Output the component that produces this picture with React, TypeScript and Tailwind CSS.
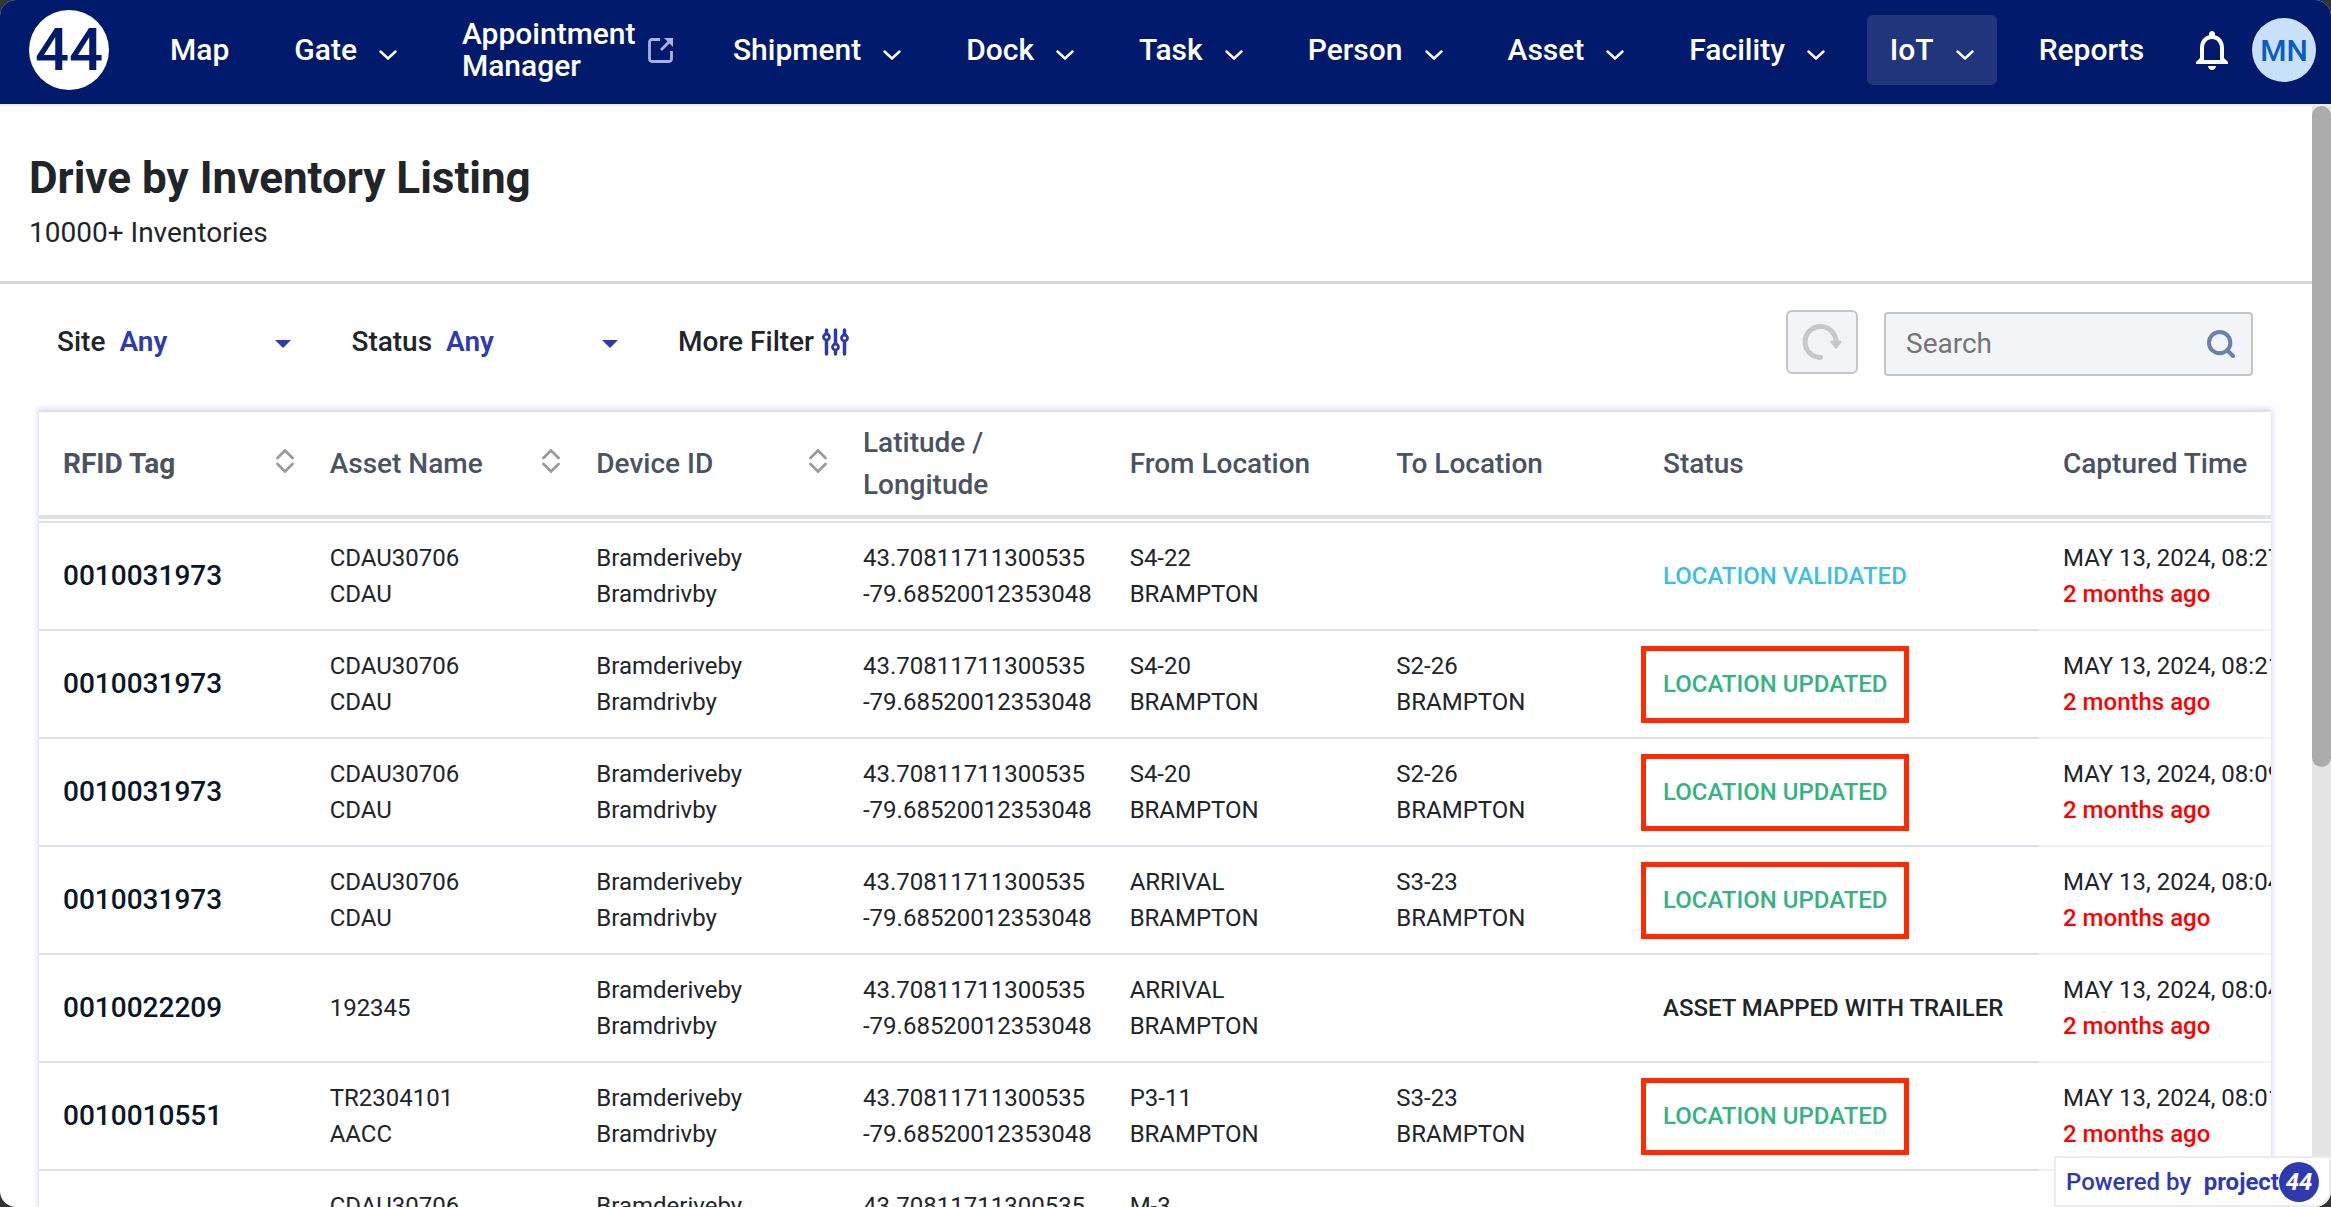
import React from "react";
import {Search} from "lucide-react";
import {MdNotificationsNone} from "react-icons/md";

type NavItem = { label: string; menu?: boolean; external?: boolean; active?: boolean };

const navItems: NavItem[] = [
  {label: "Map"},
  {label: "Gate", menu: true},
  {label: "Appointment Manager", external: true},
  {label: "Shipment", menu: true},
  {label: "Dock", menu: true},
  {label: "Task", menu: true},
  {label: "Person", menu: true},
  {label: "Asset", menu: true},
  {label: "Facility", menu: true},
  {label: "IoT", menu: true, active: true},
  {label: "Reports"},
];

type Row = {
  tag: string;
  asset: string[];
  from: string[];
  to: string[];
  status: string;
  captured: string;
};

const rows: Row[] = [
  {tag: "0010031973", asset: ["CDAU30706", "CDAU"], from: ["S4-22", "BRAMPTON"], to: [], status: "LOCATION VALIDATED", captured: "MAY 13, 2024, 08:27"},
  {tag: "0010031973", asset: ["CDAU30706", "CDAU"], from: ["S4-20", "BRAMPTON"], to: ["S2-26", "BRAMPTON"], status: "LOCATION UPDATED", captured: "MAY 13, 2024, 08:21"},
  {tag: "0010031973", asset: ["CDAU30706", "CDAU"], from: ["S4-20", "BRAMPTON"], to: ["S2-26", "BRAMPTON"], status: "LOCATION UPDATED", captured: "MAY 13, 2024, 08:09"},
  {tag: "0010031973", asset: ["CDAU30706", "CDAU"], from: ["ARRIVAL", "BRAMPTON"], to: ["S3-23", "BRAMPTON"], status: "LOCATION UPDATED", captured: "MAY 13, 2024, 08:04"},
  {tag: "0010022209", asset: ["192345"], from: ["ARRIVAL", "BRAMPTON"], to: [], status: "ASSET MAPPED WITH TRAILER", captured: "MAY 13, 2024, 08:04"},
  {tag: "0010010551", asset: ["TR2304101", "AACC"], from: ["P3-11", "BRAMPTON"], to: ["S3-23", "BRAMPTON"], status: "LOCATION UPDATED", captured: "MAY 13, 2024, 08:01"},
  {tag: "", asset: ["CDAU30706", "CDAU"], from: ["M-3", "BRAMPTON"], to: [], status: "", captured: ""},
];

const statusColors: Record<string, string> = {
  "LOCATION VALIDATED": "text-[#3fbfdf]",
  "LOCATION UPDATED": "text-[#35b383]",
};

function Chevron() {
  return <svg className="w-[18px] h-[10px] mt-2.5" viewBox="0 0 18 10" fill="none" stroke="currentColor" strokeWidth="2.4" strokeLinecap="round">
    <path d="M1.500 1.500L9 8.500l7.500-7" />
  </svg>
}

function OpenInNew() {
  return <svg className="size-[25px] shrink-0 text-[#a9b1de]" viewBox="0 0 25 25" fill="none" stroke="currentColor" strokeWidth="2.800">
    <path d="M12 1.500H4A2.500 2.500 0 0 0 1.500 4v17A2.500 2.500 0 0 0 4 23.500h17a2.500 2.500 0 0 0 2.500-2.500v-8" />
    <path d="M13 12l8-8" />
    <path d="M16 0h9v9z" fill="currentColor" stroke="none" />
  </svg>
}

function SortIcon() {
  return <svg className="w-[18px] h-6 shrink-0 -mt-1.5" viewBox="0 0 18 24" fill="none" stroke="#9b9b9b" strokeWidth="2.800" strokeLinecap="round">
    <path d="M1.500 9L9 1.500 16.500 9M1.500 15L9 22.500l7.500-7.500" />
  </svg>
}

function NavBar() {
  return <header className="h-[106px] shrink-0 bg-[#021a6b] border-b-2 border-[#f0edf5] text-white flex items-center pl-[29px] pr-[15px] pb-1">
    <a href="#" className="size-20 shrink-0 rounded-full bg-white text-[#021a6b] flex items-center justify-center text-[60px] leading-none font-medium">44</a>
    <nav className="grow flex items-center gap-[19px] ml-[38px] text-[30px] leading-8 font-medium">
      { navItems.map(item => (
        <a
          key={item.label}
          href="#"
          className={item.active
            ? "h-[70px] px-[23px] flex items-center gap-[22px] rounded-md bg-[#21357d]"
            : item.external
              ? "h-[70px] pl-[23px] pr-[18px] flex items-center gap-3"
              : "h-[70px] px-[23px] flex items-center gap-[22px]"}>
          <span className={item.external ? "w-[174px]" : ""}>{item.label}</span>
          {item.external && <OpenInNew/>}
          {item.menu && <Chevron/>}
        </a>
      ))}
    </nav>
    <button aria-label="Notifications" className="mr-4"><MdNotificationsNone className="size-12"/></button>
    <button className="size-16 shrink-0 rounded-full bg-[#c9e0f9] text-[#0a5bc4] text-[30px] font-medium">MN</button>
  </header>
}

function FilterSelect(props: { label: string; id: string }) {
  return <div className="flex items-center gap-3.5 text-[28px] font-medium">
    <label htmlFor={props.id}>{props.label}</label>
    <div className="relative flex items-center text-[#2f3ab2]">
      <select id={props.id} className="appearance-none w-[172px] font-semibold bg-transparent">
        <option>Any</option>
      </select>
      <svg className="absolute right-0 w-4 h-2 mt-1 pointer-events-none" viewBox="0 0 16 8" fill="currentColor">
        <path d="M0 0h16l-8 8z" />
      </svg>
    </div>
  </div>
}

function Toolbar() {
  return <div className="flex items-center h-[126px] pb-2.5 pl-[57px] pr-[59px]">
    <FilterSelect id="site" label="Site"/>
    <div className="ml-[60px]"><FilterSelect id="status" label="Status"/></div>
    <button className="ml-[60px] flex items-center gap-2 text-[28px] font-medium">
      More Filter
      <svg className="w-[27px] h-7 text-[#2f3ab2]" viewBox="0 0 27 28" fill="white" stroke="currentColor" strokeWidth="3.500" strokeLinecap="round">
        <path d="M4.500 2v24M13.500 2v24M22.500 2v24" />
        <g strokeWidth="2.800">
          <circle cx="4.500" cy="9" r="3" /><circle cx="13.500" cy="19" r="3" /><circle cx="22.500" cy="10" r="3" />
        </g>
      </svg>
    </button>
    <button aria-label="Refresh" className="ml-auto mr-[26px] w-[72px] h-16 rounded-md border-2 border-[#c4c6c9] bg-[#f2f4f8] flex items-center justify-center">
      <svg className="w-10 h-[38px]" viewBox="0 0 40 38" fill="none" stroke="#c6c8ca" strokeWidth="5" strokeLinecap="round" strokeLinejoin="round">
        <path d="M18.500 34.500A15.500 15.500 0 1 1 34 20" />
        <path d="M30 19h8l-4 5z" fill="#c6c8ca" strokeWidth="3" />
      </svg>
    </button>
    <div className="w-[369px] h-16 mt-1 rounded-sm border-2 border-[#c4c6c9] bg-[#f2f4f8] flex items-center pl-5 pr-3.5">
      <input aria-label="Search" placeholder="Search" className="min-w-0 grow text-[28px] placeholder:text-[#757575] outline-none"/>
      <Search className="size-8 shrink-0 text-[#6a82a6]" strokeWidth={3}/>
    </div>
  </div>
}

function HeadCell(props: { label: string; sortable?: boolean; strong?: boolean }) {
  return <th className="pl-6 pr-3 text-left border-t-2 border-b-4 border-[#dee1e6]">
    <div className="flex items-center justify-between">
      <span className={props.strong ? "font-bold" : "font-medium"}>{props.label}</span>
      {props.sortable && <SortIcon/>}
    </div>
  </th>
}

function InventoryTable() {
  return <div className="ml-[39px] mr-[41px] overflow-hidden shadow-[0_0_6px_1px_#d5d5f2]">
    <table className="table-fixed w-[2400px] border-separate border-spacing-0">
      <colgroup>
        <col/><col/><col/><col/><col/><col/>
        <col className="w-[400px]"/>
        <col className="w-[400px]"/>
      </colgroup>
      <thead className="text-[28px] leading-[42px] text-[#4b5360]">
        <tr className="h-[109px]">
          <HeadCell label="RFID Tag" sortable strong/>
          <HeadCell label="Asset Name" sortable/>
          <HeadCell label="Device ID" sortable/>
          <HeadCell label="Latitude / Longitude"/>
          <HeadCell label="From Location"/>
          <HeadCell label="To Location"/>
          <HeadCell label="Status"/>
          <HeadCell label="Captured Time"/>
        </tr>
        <tr className="h-1"><td colSpan={8} className="p-0 border-b-2 border-[#dee1e6]"></td></tr>
      </thead>
      <tbody className="text-[24px] leading-9 text-[#212529]">
        { rows.map((row, index) => (
          <tr key={index} className="h-[108px]">
            <td className="px-6 border-b-2 border-[#dee1e6] text-[28px] font-medium text-[#0b1727]">{row.tag}</td>
            <td className="px-6 border-b-2 border-[#dee1e6]">{row.asset.map(line => <div key={line}>{line}</div>)}</td>
            <td className="px-6 border-b-2 border-[#dee1e6]"><div>Bramderiveby</div><div>Bramdrivby</div></td>
            <td className="px-6 border-b-2 border-[#dee1e6]"><div>43.70811711300535</div><div>-79.68520012353048</div></td>
            <td className="px-6 border-b-2 border-[#dee1e6]">{row.from.map(line => <div key={line}>{line}</div>)}</td>
            <td className="px-6 border-b-2 border-[#dee1e6]">{row.to.map(line => <div key={line}>{line}</div>)}</td>
            <td className="px-0.5 border-b-2 border-[#dee1e6] font-medium">
              <div className={row.status === "LOCATION UPDATED"
                ? "w-[268px] h-[77px] pl-[17px] flex items-center border-[5px] border-[#ff2a00]"
                : "pl-[22px]"}>
                <span className={statusColors[row.status]}>{row.status}</span>
              </div>
            </td>
            <td className="px-6 border-b-2 border-[#f3f3f3] whitespace-nowrap">
              <div>{row.captured}</div>
              <div className="font-medium text-[#ff0000]">{row.captured && "2 months ago"}</div>
            </td>
          </tr>
        ))}
      </tbody>
    </table>
  </div>
}

function PoweredBy() {
  return <div className="absolute right-0 bottom-0 w-[277px] h-[51px] px-2.5 flex items-center justify-between bg-white border-2 border-[#ececec] rounded-br-2xl text-[#2f3ab2]">
    <span className="text-[24px] font-medium">Powered by</span>
    <a href="#" className="flex items-center text-[24px] font-bold">
      project
      <span className="size-10 rounded-full bg-[#2f3ab2] text-white flex items-center justify-center italic">44</span>
    </a>
  </div>
}

function App() {
  return <div className="h-screen bg-[#333]">
    <div className="relative h-full flex flex-col overflow-hidden rounded-2xl bg-white font-[Roboto,sans-serif] text-[#212529]">
      <NavBar/>
      <div className="flex grow min-h-0">
        <main className="grow min-w-0 overflow-hidden">
          <div className="h-[178px] pt-[46px] pl-[29px] border-b-[3px] border-[#d6d8d8]">
            <h1 className="text-[44px] leading-[52px] font-bold">Drive by Inventory Listing</h1>
            <p className="text-[28px] leading-[42px] mt-2">10000+ Inventories</p>
          </div>
          <Toolbar/>
          <InventoryTable/>
        </main>
        <div className="w-[19px] shrink-0 bg-[#e5e5e5]">
          <div className="h-[60%] rounded-full bg-[#ababab]"></div>
        </div>
      </div>
      <PoweredBy/>
    </div>
  </div>
}

export default App;
